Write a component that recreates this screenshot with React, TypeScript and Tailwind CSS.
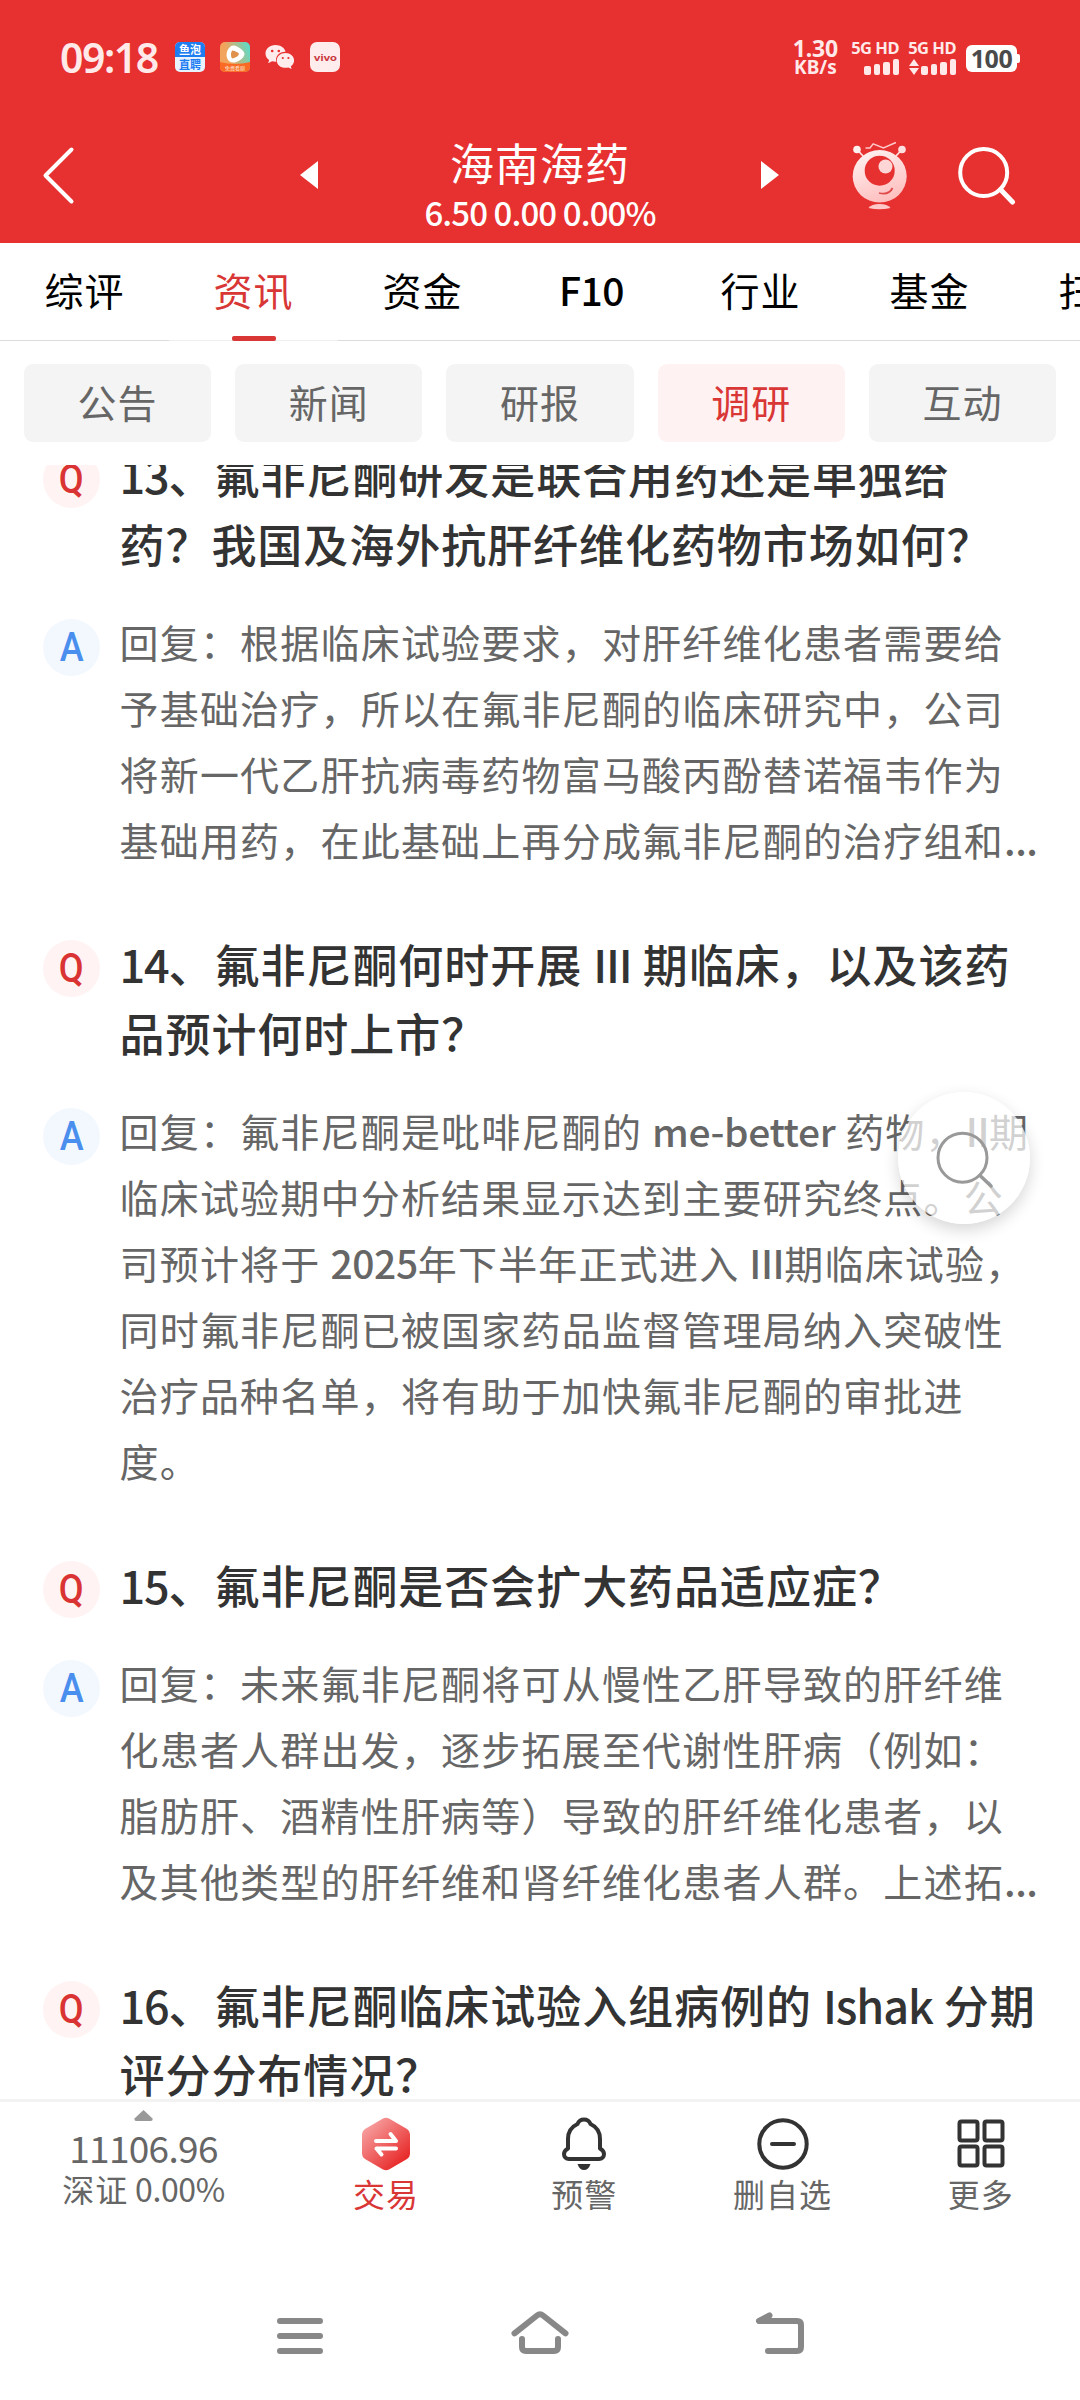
import React from 'react';

interface QaItem {
    question: string[];
    answer: string[];
}

const tabs = ['综评', '资讯', '资金', 'F10', '行业', '基金', '扫雷'];
const filters = ['公告', '新闻', '研报', '调研', '互动'];

const qaItems: QaItem[] = [
    {
        question: ['13、氟非尼酮研发是联合用药还是单独给', '药？我国及海外抗肝纤维化药物市场如何？'],
        answer: [
            '回复：根据临床试验要求，对肝纤维化患者需要给',
            '予基础治疗，所以在氟非尼酮的临床研究中，公司',
            '将新一代乙肝抗病毒药物富马酸丙酚替诺福韦作为',
            '基础用药，在此基础上再分成氟非尼酮的治疗组和...',
        ],
    },
    {
        question: ['14、氟非尼酮何时开展 III 期临床，以及该药', '品预计何时上市？'],
        answer: [
            '回复：氟非尼酮是吡啡尼酮的 me-better 药物，II期',
            '临床试验期中分析结果显示达到主要研究终点。公',
            '司预计将于 2025年下半年正式进入 III期临床试验，',
            '同时氟非尼酮已被国家药品监督管理局纳入突破性',
            '治疗品种名单，将有助于加快氟非尼酮的审批进',
            '度。',
        ],
    },
    {
        question: ['15、氟非尼酮是否会扩大药品适应症？'],
        answer: [
            '回复：未来氟非尼酮将可从慢性乙肝导致的肝纤维',
            '化患者人群出发，逐步拓展至代谢性肝病（例如：',
            '脂肪肝、酒精性肝病等）导致的肝纤维化患者，以',
            '及其他类型的肝纤维和肾纤维化患者人群。上述拓...',
        ],
    },
    {
        question: ['16、氟非尼酮临床试验入组病例的 Ishak 分期', '评分分布情况？'],
        answer: [],
    },
];

// Latin runs are set a little tighter and heavier than the Chinese around them.
const MixedText = ({ text, latin }: { text: string; latin: string }) => (
    <>
        {text.split(/([\x21-\x7e]+)/).map((part, i) =>
            i % 2 === 1 ? (
                <span key={i} className={latin}>
                    {part}
                </span>
            ) : (
                part
            ),
        )}
    </>
);

const Badge = ({ kind }: { kind: 'Q' | 'A' }) => (
    <div
        className={`mt-[11px] grid h-[57px] w-[57px] shrink-0 place-items-center rounded-full font-['Roboto',sans-serif] text-[41px] leading-none font-medium ${
            kind === 'Q' ? 'bg-[#fff3f3] text-[#d93333]' : 'bg-[#f3f8ff] text-[#4a8fee]'
        }`}
    >
        <span className="scale-x-[0.88]">{kind}</span>
    </div>
);

const SignalBars = () => (
    <div className="flex items-end gap-[3px]">
        <i className="h-[9px] w-[6.5px] rounded-[2px] bg-[#ffe9e9]" />
        <i className="h-[11px] w-[6.5px] rounded-[2px] bg-[#ffe9e9]" />
        <i className="h-[13px] w-[6.5px] rounded-[2px] bg-[#ffe9e9]" />
        <i className="h-[16px] w-[6.5px] rounded-[2px] bg-[#ffe9e9]" />
    </div>
);

const StatusBar = () => (
    <div className="flex h-[114px] items-center pl-[60px] pr-[60px] text-[#ffe9e9]">
        <span className="w-[115px] font-['Noto_Sans',sans-serif] text-[41px] leading-none font-semibold tracking-[-1.5px]">09:18</span>
        <div className="flex items-center gap-[15px]">
            <div className="flex h-[30px] w-[30px] flex-col overflow-hidden rounded-[5px] bg-[#e8f3ff] text-center text-[11px] leading-[15px] font-bold">
                <span className="bg-[#1f7df2] text-white">鱼泡</span>
                <span className="text-[#1f7df2]">直聘</span>
            </div>
            <svg width="30" height="30" viewBox="0 0 30 30">
                <defs>
                    <linearGradient id="video" x1="0" y1="0.3" x2="1" y2="0">
                        <stop offset="0.2" stopColor="#f2a45c" />
                        <stop offset="1" stopColor="#4fe0d0" />
                    </linearGradient>
                </defs>
                <rect width="30" height="30" rx="5" fill="url(#video)" />
                <path d="M0 20q15 4 30 0v5a5 5 0 0 1-5 5H5a5 5 0 0 1-5-5z" fill="#fb6a24" />
                <path d="M9.500 5.500Q12 2 18 5Q25 9 24.500 12.500Q23 18 15 20.500Q8 21.500 6.500 14Q6.500 8 9.500 5.500z" fill="#fff" />
                <path d="M12 8.500q6 1 7 3.500q-1 3-7 4.500q-2-4 0-8z" fill="#e0914c" />
                <text x="15" y="28" fontSize="5" textAnchor="middle" fill="#ffe9d9">免费看剧</text>
            </svg>
            <svg width="30" height="30" viewBox="0 0 30 30" fill="#ffecec">
                <path d="M10.500 3C4.700 3 .5 6.800.5 11.500c0 2.700 1.400 5 3.600 6.500L3.200 21.300l3.900-2c1.100.3 2.200.5 3.400.5h.8c-1.500-5.800 3.300-10.300 9.200-10.100C19.600 5.800 15.500 3 10.500 3z" />
                <path d="M20.500 11c-5 0-8.700 3.300-8.700 7.400s3.700 7.400 8.700 7.400c1 0 2-.2 2.900-.4l3.200 1.700-.8-2.800c2-1.400 3.300-3.500 3.300-5.900 0-4.100-3.700-7.400-8.600-7.400z" />
                <g fill="#e73030">
                    <circle cx="7.200" cy="9" r="1.300" />
                    <circle cx="13.800" cy="9" r="1.300" />
                    <circle cx="17.800" cy="16" r="1.100" />
                    <circle cx="23.400" cy="16" r="1.100" />
                </g>
            </svg>
            <div className="grid h-[30px] w-[30px] place-items-center rounded-[7px] bg-[#ffecec] font-['Inter',sans-serif] text-[9px] leading-none font-bold text-[#c9383c]">
                <span className="scale-x-[1.25]">vivo</span>
            </div>
        </div>
        <div className="ml-auto flex items-center font-['Noto_Sans',sans-serif] font-bold">
            <div className="mr-[13px] flex flex-col items-center text-[19px] leading-[18px]">
                <span className="text-[23px] leading-[20px] tracking-[-0.2px]">1.30</span>
                <span>KB/s</span>
            </div>
            <div className="mr-[9px] flex w-[48px] flex-col items-end gap-1 text-[16.500px] leading-[15px]">
                <span className="tracking-[-0.5px] whitespace-nowrap">5G HD</span>
                <SignalBars />
            </div>
            <div className="mr-[10px] flex w-[48px] flex-col items-end gap-1 text-[16.500px] leading-[15px]">
                <span className="tracking-[-0.5px] whitespace-nowrap">5G HD</span>
                <div className="flex items-end gap-[2px]">
                    <svg width="10" height="16" viewBox="0 0 10 16" fill="#ffe9e9">
                        <path d="M5 0l5 7H0zM5 16l5-7H0z" />
                    </svg>
                    <SignalBars />
                </div>
            </div>
            <div className="flex items-center pt-[2px]">
                <div className="grid h-[27px] w-[51px] place-items-center rounded-[6px] bg-white text-[25px] leading-none tracking-[-0.5px] text-[#4a4a4a]">100</div>
                <i className="h-[9px] w-[3px] rounded-r-[2px] bg-white" />
            </div>
        </div>
    </div>
);

const Robot = () => (
    <svg width="56" height="66" viewBox="852 142 56 66" overflow="visible">
        <defs>
            <linearGradient id="robot" x1="0.3" y1="0" x2="0.7" y2="1">
                <stop offset="0" stopColor="#fff0f0" />
                <stop offset="1" stopColor="#ffbcbc" />
            </linearGradient>
        </defs>
        <path d="M857 149.500l6.500 7M902 149.500l-6.500 7" stroke="#ffdede" strokeWidth="1.800" />
        <circle cx="857" cy="149.500" r="3.800" fill="#fff0f0" />
        <circle cx="902" cy="149.500" r="3.800" fill="#ffe0e0" />
        <path d="M865.500 148h4.500l3.200-4.200 10.200 4.200 12.500-5.500" stroke="#ffc9c9" strokeWidth="1.500" fill="none" />
        <ellipse cx="879.700" cy="176.300" rx="27" ry="26.300" fill="url(#robot)" />
        <circle cx="879.700" cy="170.700" r="15" fill="#e73030" />
        <circle cx="885.500" cy="166.500" r="7" fill="#ffd6d6" />
        <path d="M879 193q10 2.500 13.500-5" stroke="#e04a4a" strokeWidth="1.800" fill="none" />
        <path d="M868.500 208q3-4 11-4t11 4q-11 2.500-22 0z" fill="#ffc9c9" />
    </svg>
);

const Header = () => (
    <header className="h-[243px] bg-[#e73030] text-white">
        <StatusBar />
        <div className="flex h-[122px] items-center pl-[41px] pr-[63px]">
            <svg width="34" height="60" viewBox="0 0 34 60" fill="none" stroke="#fff" strokeWidth="4" strokeLinecap="round" strokeLinejoin="round">
                <path d="M30.500 4.500L4.500 30.500 30.500 56.500" />
            </svg>
            <svg className="ml-[224px]" width="20" height="28" viewBox="0 0 20 28" fill="#fff">
                <path d="M1 14L19 0v28z" />
            </svg>
            <div className="flex w-[442px] flex-col items-center pt-[19px] whitespace-nowrap">
                <h1 className="text-[44px] leading-[54px] tracking-[1px]">海南海药</h1>
                <p className="text-[33px] leading-[46px] font-medium tracking-[-0.9px]">6.50 0.00 0.00%</p>
            </div>
            <svg width="18" height="28" viewBox="0 0 18 28" fill="#fff">
                <path d="M18 14L0 0v28z" />
            </svg>
            <div className="ml-[73px]">
                <Robot />
            </div>
            <svg className="ml-auto" width="60" height="60" viewBox="957 145 60 60" fill="none" stroke="#fff" strokeWidth="4" strokeLinecap="round">
                <circle cx="983.700" cy="172.500" r="23.500" />
                <path d="M1000.500 189.500l12 12.500" strokeWidth="5" />
            </svg>
        </div>
    </header>
);

const TabBar = () => (
    <nav className="flex h-[98px] overflow-hidden text-[39px] tracking-[1px] text-black">
        {tabs.map((tab) => (
            <div
                key={tab}
                className={`flex w-[169px] shrink-0 flex-col items-center border-b ${tab === '资讯' ? 'border-[#eeeeee] text-[#d93636]' : 'border-[#dcdcdc]'}`}
            >
                <span className={`leading-[93px] ${tab === 'F10' ? 'font-medium tracking-[-0.5px]' : ''}`}>{tab}</span>
                {tab === '资讯' && <i className="h-[5px] w-[44px] shrink-0 rounded-[2px] bg-[#d93636]" />}
            </div>
        ))}
    </nav>
);

const FilterBar = () => (
    <div className="grid h-[124px] grid-cols-5 gap-6 px-6 pt-[23px] pb-[23px] text-[39px] tracking-[1px]">
        {filters.map((name) => (
            <button
                key={name}
                className={`rounded-[9px] pb-1 leading-none ${name === '调研' ? 'bg-[#fff2f2] text-[#d93636]' : 'bg-[#f4f4f4] text-[#666666]'}`}
            >
                {name}
            </button>
        ))}
    </div>
);

const QaList = () => (
    <main className="h-[1634px] overflow-hidden">
        <div className="-mt-[25px] flex flex-col gap-[57.5px] pl-[43px]">
            {qaItems.map((item) => (
                <section key={item.question[0]} className="flex flex-col gap-[29.5px] whitespace-nowrap">
                    <div className="flex gap-[19.5px]">
                        <Badge kind="Q" />
                        <div className="text-[45px] leading-[69px] font-medium tracking-[0.95px] text-[#333333]">
                            {item.question.map((line) => (
                                <p key={line}>
                                    <MixedText text={line} latin="tracking-[-1.1px]" />
                                </p>
                            ))}
                        </div>
                    </div>
                    {item.answer.length > 0 && (
                        <div className="flex gap-[19.5px]">
                            <Badge kind="A" />
                            <div className="text-[39px] leading-[66px] tracking-[1.2px] text-[#666666]">
                                {item.answer.map((line) => (
                                    <p key={line}>
                                        <MixedText text={line} latin="font-medium tracking-[-0.4px]" />
                                    </p>
                                ))}
                            </div>
                        </div>
                    )}
                </section>
            ))}
        </div>
    </main>
);

const HexIcon = () => (
    <svg width="54" height="54" viewBox="0 0 54 54">
        <defs>
            <linearGradient id="hex" x1="0.1" y1="0.1" x2="0.8" y2="0.9">
                <stop offset="0" stopColor="#f7a3a3" />
                <stop offset="1" stopColor="#e82828" />
            </linearGradient>
        </defs>
        <path d="M24 1.500q3-1.500 6 0l18 10.500q3 2 3 5v20q0 3-3 5L30 52.500q-3 1.500-6 0L6 42q-3-2-3-5V17q0-3 3-5z" fill="url(#hex)" />
        <path d="M17 24h20l-5.500-7M37 31.500H17.500l5 6" fill="none" stroke="#fff" strokeWidth="4" strokeLinecap="round" strokeLinejoin="round" />
    </svg>
);

const BellIcon = () => (
    <svg width="54" height="54" viewBox="0 0 54 54" fill="none" stroke="#333" strokeWidth="4" strokeLinejoin="round">
        <path d="M27 2.500c-3.500 0-5.500 2-6.500 4.500C14 10 11 15.500 11 22v9.500c-2.500 1.500-4 3-4 5.500 0 3 2 5 5 5h30c3 0 5-2 5-5 0-2.500-1.500-4-4-5.500V22c0-6.500-3-12-9.500-15-1-2.500-3-4.500-6.500-4.500z" />
        <path d="M20.500 47h13q-2 6-6.500 6t-6.500-6z" fill="#333" stroke="none" />
    </svg>
);

const MinusIcon = () => (
    <svg width="54" height="54" viewBox="0 0 54 54" fill="none" stroke="#333" strokeWidth="4" strokeLinecap="round">
        <circle cx="27" cy="27" r="23.700" />
        <path d="M16 27h22" />
    </svg>
);

const GridIcon = () => (
    <svg width="54" height="54" viewBox="0 0 54 54" fill="none" stroke="#333" strokeWidth="4">
        <rect x="5.500" y="4.500" width="18" height="19" rx="2" />
        <rect x="30.500" y="4.500" width="18" height="19" rx="2" />
        <rect x="5.500" y="29.500" width="18" height="19" rx="2" />
        <rect x="30.500" y="29.500" width="18" height="19" rx="2" />
    </svg>
);

const actions = [
    { label: '交易', icon: <HexIcon /> },
    { label: '预警', icon: <BellIcon /> },
    { label: '删自选', icon: <MinusIcon /> },
    { label: '更多', icon: <GridIcon /> },
];

const BottomBar = () => (
    <footer className="flex h-[169px] border-t-[3px] border-[#f3f3f3] text-[#666666]">
        <div className="flex w-[287px] flex-col items-center pt-2 whitespace-nowrap">
            <svg width="19" height="11" viewBox="0 0 19 11" fill="#999">
                <path d="M9.500 0L18.500 8.500Q19 11 16.500 11H2.500Q0 11 .5 8.500z" />
            </svg>
            <span className="mt-[3px] text-[37px] leading-[46px] tracking-[-0.7px]">11106.96</span>
            <span className="text-[32px] leading-[36px] tracking-[1px]">
                深证<span className="tracking-[-0.4px]"> 0.00%</span>
            </span>
        </div>
        {actions.map(({ label, icon }) => (
            <div key={label} className="flex flex-1 flex-col items-center pt-[15px]">
                {icon}
                <span className={`text-[32px] leading-[44px] tracking-[1px] ${label === '交易' ? 'text-[#d93636]' : ''}`}>{label}</span>
            </div>
        ))}
    </footer>
);

const SystemNav = () => (
    <div className="flex h-[132px] items-center justify-center gap-[100px] pt-1">
        <svg width="140" height="60" viewBox="230 2307 140 60" fill="none" stroke="#888" strokeWidth="6" strokeLinecap="round">
            <path d="M280 2322h40M280 2337h40M280 2352h40" />
        </svg>
        <svg width="140" height="60" viewBox="470 2307 140 60" fill="none" stroke="#888" strokeWidth="6" strokeLinecap="round" strokeLinejoin="round">
            <path d="M514.500 2334.300L537 2316.500Q540 2314 543 2316.500L565.500 2334.300" />
            <path d="M522 2340v8q0 4 4 4h28q4 0 4-4v-8" />
        </svg>
        <svg width="140" height="60" viewBox="710 2307 140 60" fill="none" stroke="#888" strokeWidth="6" strokeLinecap="round" strokeLinejoin="round">
            <path d="M769.500 2316.500L759 2322h38q4 0 4 4v22q0 4-4 4h-29" />
        </svg>
    </div>
);

const App = () => (
    <div className="relative h-[2400px] w-[1080px] overflow-hidden bg-white font-['Noto_Sans_CJK_SC',sans-serif]">
        <Header />
        <TabBar />
        <FilterBar />
        <QaList />
        <BottomBar />
        <SystemNav />
        <button className="absolute top-[1092px] left-[898px] h-[132px] w-[132px] rounded-full bg-white/70 shadow-[0_6px_16px_rgba(0,0,0,0.16)]">
            <svg width="132" height="132" viewBox="898 1091 132 132" fill="none" stroke="#999" strokeWidth="3" strokeLinecap="round">
                <circle cx="962.500" cy="1156.700" r="24.500" />
                <path d="M980 1174.500l11 10.500" strokeWidth="3.500" />
            </svg>
        </button>
    </div>
);

export default App;
